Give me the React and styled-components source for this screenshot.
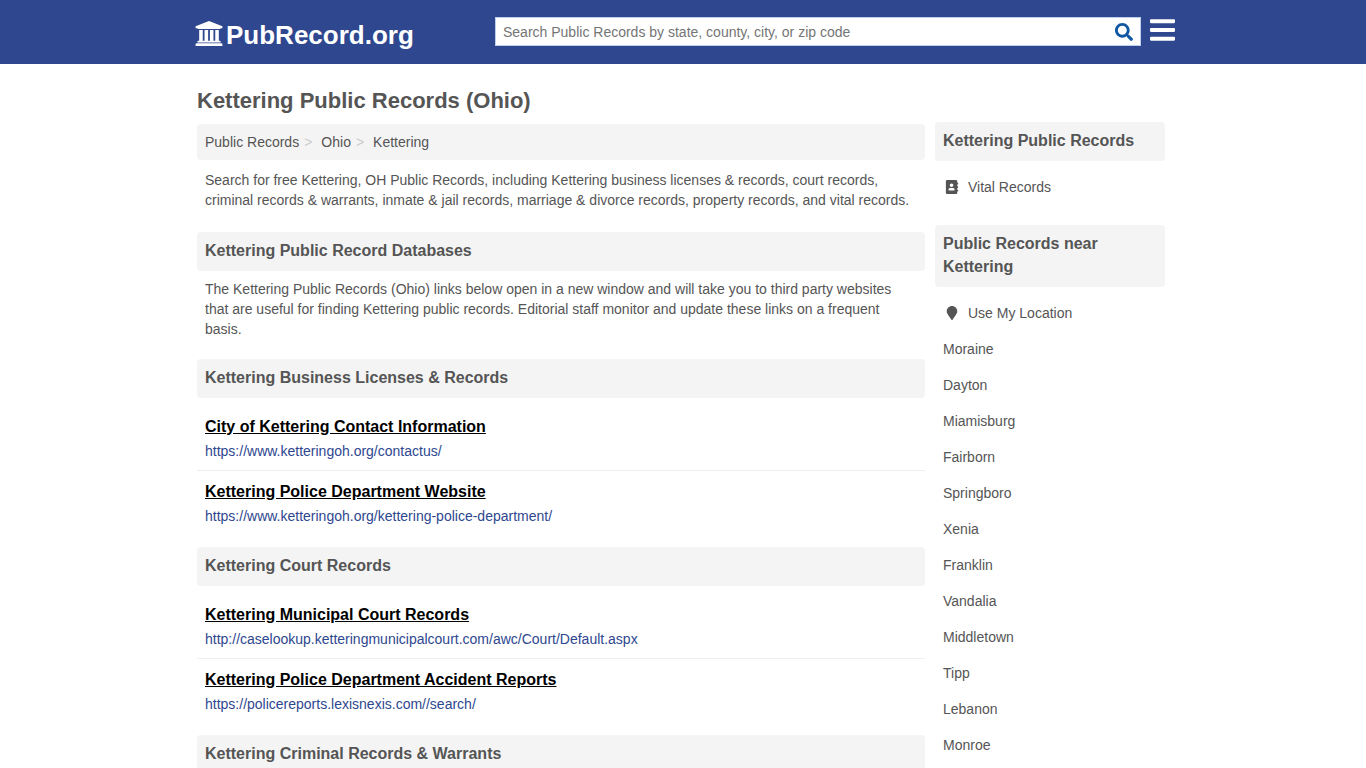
import React from "react";
import styled, { createGlobalStyle } from "styled-components";
import { FaSearch, FaBars, FaAddressBook, FaMapMarker } from "react-icons/fa";

const GlobalStyle = createGlobalStyle`
  * { box-sizing: border-box; }
  body {
    margin: 0;
    background: #fff;
    color: #555;
    font: 14px/20px "Liberation Sans", Arial, sans-serif;
  }
  a { color: inherit; text-decoration: none; }
  h1, h2, h3, p, ul, ol { margin: 0; padding: 0; }
  ul, ol { list-style: none; }
`;

const Header = styled.header`
  background: #2e478f;
  height: 64px;
`;

const HeaderInner = styled.div`
  max-width: 984px;
  margin: 0 auto;
  padding: 16px 0 0 4px;
  display: flex;
  align-items: flex-start;
`;

const Logo = styled.a`
  display: flex;
  align-items: flex-start;
  gap: 3px;
  flex: 0 0 300px;
  color: #fff;
  font-size: 26px;
  line-height: 38px;
  font-weight: bold;
`;

const LogoIcon = styled.svg`
  width: 28px;
  height: 25px;
  margin-top: 5px;
  fill: currentColor;
`;

const SearchForm = styled.form`
  display: flex;
  flex: 1;
  min-width: 0;
  height: 29px;
  margin-top: 1px;
  border: 1px solid #bcd0ee;
  background: #fff;
`;

const SearchInput = styled.input`
  flex: 1;
  min-width: 0;
  border: 0;
  outline: 0;
  padding: 1px 7px 0;
  background: transparent;
  color: #555;
  font: inherit;
  &::placeholder { color: #757575; opacity: 1; }
`;

const SearchButton = styled.button`
  display: flex;
  align-items: center;
  border: 0;
  padding: 1px 7px 0;
  background: transparent;
  color: #0f57a3;
  svg { width: 18px; height: 18px; }
`;

const MenuButton = styled.button`
  display: flex;
  border: 0;
  padding: 0;
  margin-left: 9px;
  background: transparent;
  color: #fff;
  svg { width: 25px; height: 28px; }
`;

const Page = styled.div`
  max-width: 972px;
  margin: 0 auto;
  padding: 22px 4px 0 0;
`;

const PageTitle = styled.h1`
  font-size: 22px;
  line-height: 30px;
  padding-bottom: 6px;
`;

const Columns = styled.div`
  display: flex;
  align-items: flex-start;
  gap: 10px;
`;

const Main = styled.main`
  flex: 1;
  min-width: 0;
  padding-top: 2px;
`;

const Sidebar = styled.aside`
  flex: 0 0 230px;
`;

const Breadcrumb = styled.ol`
  display: flex;
  padding: 8px;
  background: #f4f4f4;
  border-radius: 4px;
`;

const Crumb = styled.li`
  &:not(:last-child)::after {
    content: ">";
    color: #ccc;
    padding: 0 9px 0 5px;
  }
`;

const Text = styled.p`
  padding: 0 8px;
  margin: ${(p) => (p.$intro ? "10px 0 22px" : "8px 0 20px")};
`;

const Heading = styled.h2`
  padding: 7px 8px 9px;
  background: #f4f4f4;
  border-radius: 4px;
  font-size: 16px;
  line-height: 23px;
`;

const RecordList = styled.ul`
  margin: 8px 0 12px;
`;

const RecordItem = styled.li`
  padding: 8px;
  & + & { border-top: 1px solid #eee; }
`;

const RecordTitle = styled.h3`
  color: #000;
  font-size: 16px;
  line-height: 26px;
  a { text-decoration: underline; }
`;

const RecordUrl = styled.a`
  display: block;
  line-height: 22px;
  color: #2e478f;
`;

const SideList = styled.ul`
  margin: 8px 0 20px;
`;

const SideLink = styled.a`
  display: flex;
  align-items: center;
  gap: 7px;
  padding: 8px;
  svg { width: 18px; height: 14px; }
`;

const sections = [
  {
    title: "Kettering Business Licenses & Records",
    records: [
      ["City of Kettering Contact Information", "https://www.ketteringoh.org/contactus/"],
      ["Kettering Police Department Website", "https://www.ketteringoh.org/kettering-police-department/"],
    ],
  },
  {
    title: "Kettering Court Records",
    records: [
      ["Kettering Municipal Court Records", "http://caselookup.ketteringmunicipalcourt.com/awc/Court/Default.aspx"],
      ["Kettering Police Department Accident Reports", "https://policereports.lexisnexis.com//search/"],
    ],
  },
  { title: "Kettering Criminal Records & Warrants", records: [] },
];

const nearby = [
  "Moraine", "Dayton", "Miamisburg", "Fairborn", "Springboro", "Xenia",
  "Franklin", "Vandalia", "Middletown", "Tipp", "Lebanon", "Monroe",
];

export default function App() {
  return (
    <>
      <GlobalStyle />
      <Header>
        <HeaderInner>
          <Logo href="#">
            <LogoIcon viewBox="0 0 1920 1792" aria-hidden="true">
              <path d="M960 0l960 384v128h-128q0 26-20.5 45t-48.5 19h-1526q-28 0-48.5-19t-20.5-45h-128v-128zm-704 640h256v768h128v-768h256v768h128v-768h256v768h128v-768h256v768h59q28 0 48.5 19t20.5 45v64h-1664v-64q0-26 20.5-45t48.5-19h59v-768zm1595 960q28 0 48.5 19t20.5 45v128h-1920v-128q0-26 20.5-45t48.5-19h1782z" />
            </LogoIcon>
            PubRecord.org
          </Logo>
          <SearchForm role="search" onSubmit={(e) => e.preventDefault()}>
            <SearchInput
              type="text"
              aria-label="Search Public Records"
              placeholder="Search Public Records by state, county, city, or zip code"
            />
            <SearchButton type="submit" aria-label="Search"><FaSearch /></SearchButton>
          </SearchForm>
          <MenuButton type="button" aria-label="Menu"><FaBars preserveAspectRatio="none" /></MenuButton>
        </HeaderInner>
      </Header>
      <Page>
        <PageTitle>Kettering Public Records (Ohio)</PageTitle>
        <Columns>
          <Main>
            <nav aria-label="Breadcrumb">
              <Breadcrumb>
                <Crumb><a href="#">Public Records</a></Crumb>
                <Crumb><a href="#">Ohio</a></Crumb>
                <Crumb><a href="#">Kettering</a></Crumb>
              </Breadcrumb>
            </nav>
            <Text $intro>
              Search for free Kettering, OH Public Records, including Kettering business licenses &amp; records, court
              records, criminal records &amp; warrants, inmate &amp; jail records, marriage &amp; divorce records,
              property records, and vital records.
            </Text>
            <Heading>Kettering Public Record Databases</Heading>
            <Text>
              The Kettering Public Records (Ohio) links below open in a new window and will take you to third party
              websites that are useful for finding Kettering public records. Editorial staff monitor and update these
              links on a frequent basis.
            </Text>
            {sections.map(({ title, records }) => (
              <section key={title}>
                <Heading>{title}</Heading>
                {records.length > 0 && (
                  <RecordList>
                    {records.map(([name, url]) => (
                      <RecordItem key={url}>
                        <RecordTitle><a href={url}>{name}</a></RecordTitle>
                        <RecordUrl href={url}>{url}</RecordUrl>
                      </RecordItem>
                    ))}
                  </RecordList>
                )}
              </section>
            ))}
          </Main>
          <Sidebar>
            <Heading>Kettering Public Records</Heading>
            <SideList>
              <li><SideLink href="#"><FaAddressBook aria-hidden="true" />Vital Records</SideLink></li>
            </SideList>
            <Heading>Public Records near Kettering</Heading>
            <SideList>
              <li><SideLink href="#"><FaMapMarker aria-hidden="true" />Use My Location</SideLink></li>
              {nearby.map((city) => (
                <li key={city}><SideLink href="#">{city}</SideLink></li>
              ))}
            </SideList>
          </Sidebar>
        </Columns>
      </Page>
    </>
  );
}
